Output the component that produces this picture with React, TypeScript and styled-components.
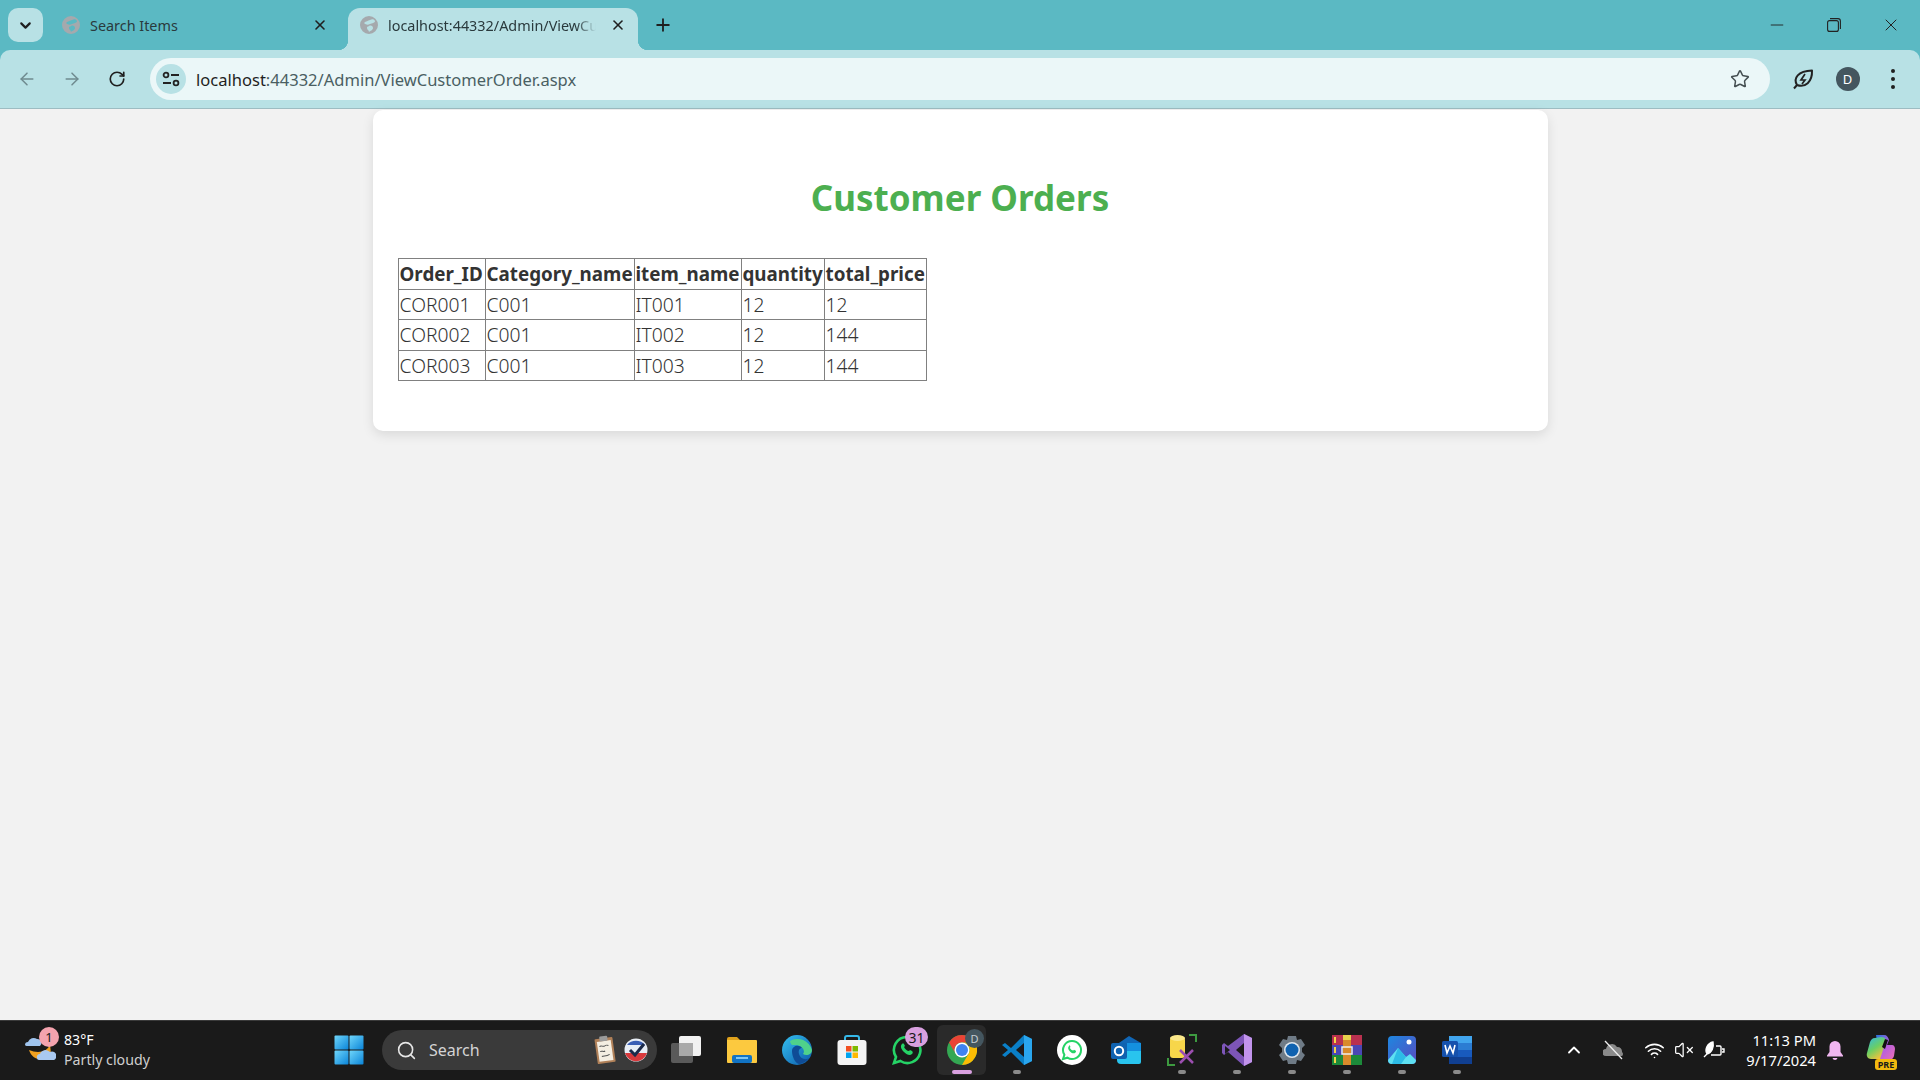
import React from "react";
import styled, { createGlobalStyle } from "styled-components";
import {
  ArrowLeft,
  ArrowRight,
  ChevronDown,
  ChevronUp,
  Minus,
  Plus,
  RotateCw,
  Search,
  Star,
  VolumeX,
  Wifi,
  X,
} from "lucide-react";

const orders = [
  { id: "COR001", category: "C001", item: "IT001", quantity: "12", total: "12" },
  { id: "COR002", category: "C001", item: "IT002", quantity: "12", total: "144" },
  { id: "COR003", category: "C001", item: "IT003", quantity: "12", total: "144" },
];

const UI_FONT = `"Noto Sans", "Open Sans", "Liberation Sans", sans-serif`;

const GlobalStyle = createGlobalStyle`
  html, body {
    margin: 0;
    padding: 0;
    height: 100%;
    overflow: hidden;
  }
  body {
    font-family: ${UI_FONT};
  }
`;

// Browser icons

const GlobeFavicon = () => (
  <svg width="18" height="18" viewBox="0 0 18 18">
    <path
      fillRule="evenodd"
      fill="#a5a9ad"
      d="M9 0a9 9 0 1 0 0 18A9 9 0 0 0 9 0zM4 7c2-2 4-2 6-3s4-1 5 1c0 2-3 2-5 3S6 9 4 7zm5 3c2-1 4 0 4 2s-3 3-4 4c0-2-2-2-2-4s1-1 2-2z"
    />
  </svg>
);

// Taskbar logos

const WindowsLogo = () => (
  <svg width="30" height="30" viewBox="0 0 30 30">
    <defs>
      <linearGradient id="win" x1="0" y1="0" x2="1" y2="1">
        <stop offset="0" stopColor="#6fd6fb" />
        <stop offset="1" stopColor="#0a84d8" />
      </linearGradient>
    </defs>
    <rect x="0.5" y="0.5" width="14" height="14" rx="1" fill="url(#win)" />
    <rect x="15.5" y="0.5" width="14" height="14" rx="1" fill="url(#win)" />
    <rect x="0.5" y="15.5" width="14" height="14" rx="1" fill="url(#win)" />
    <rect x="15.5" y="15.5" width="14" height="14" rx="1" fill="url(#win)" />
  </svg>
);

const WeatherIcon = () => (
  <svg width="32" height="36" viewBox="0 0 32 36">
    <path d="M5 18c3 10 15 13 22 4l-1-10c-2 8-12 10-21 6z" fill="#f0a020" />
    <path d="M1 13a3 3 0 0 1 3-3 6 6 0 0 1 9-3 4 4 0 0 1 3 7H3a2 2 0 0 1-2-1z" fill="#9fc4ee" />
    <path d="M13 26a3 3 0 0 1 3-4 6 6 0 0 1 10-2 4 4 0 0 1 4 8H15a2 2 0 0 1-2-2z" fill="#a9c9f0" />
  </svg>
);

const ClipboardIcon = () => (
  <svg width="24" height="30" viewBox="0 0 24 30">
    <g transform="rotate(-8 12 15)">
      <rect x="3" y="3" width="18" height="25" rx="1" fill="#b08058" />
      <rect x="5" y="6" width="14" height="20" fill="#f4eee2" />
      <rect x="8" y="1" width="8" height="5" rx="1" fill="#9a9a9a" />
      <path d="M7 11c2-2 3 1 5 0s2-1 4 0M7 16c2-1 3 1 5 0M8 21c2-1 4 1 8-1" stroke="#555" fill="none" strokeWidth="1" />
    </g>
  </svg>
);

const BallotIcon = () => (
  <svg width="24" height="24" viewBox="0 0 24 24">
    <circle cx="12" cy="12" r="11.5" fill="#e8eef6" />
    <path d="M1 15h22a11.5 11.5 0 0 1-22 0z" fill="#d8393c" />
    <path d="M3 7a11.5 11.5 0 0 1 18 0z" fill="#3a5fb5" />
    <path d="M6 12l5 5 9-11" stroke="#1b2a4a" strokeWidth="3" fill="none" />
  </svg>
);

const TaskViewIcon = () => (
  <svg width="32" height="30" viewBox="0 0 32 30">
    <rect x="0" y="8" width="22" height="20" rx="2" fill="#5a5a5a" />
    <rect x="8" y="1" width="22" height="20" rx="2" fill="#f1f1f1" />
    <rect x="8" y="8" width="14" height="13" fill="#a9a9a9" />
  </svg>
);

const ExplorerIcon = () => (
  <svg width="32" height="30" viewBox="0 0 32 30">
    <path d="M1 4a2 2 0 0 1 2-2h8l3 3h-13z" fill="#e0a21c" />
    <path d="M1 5h29a1 1 0 0 1 1 1v21a1 1 0 0 1-1 1H2a1 1 0 0 1-1-1z" fill="#fcc93f" />
    <rect x="6" y="20" width="20" height="8" rx="2" fill="#1173c4" />
    <rect x="10" y="22" width="12" height="2" fill="#7cc6f5" />
  </svg>
);

const EdgeIcon = () => (
  <svg width="30" height="30" viewBox="0 0 30 30">
    <defs>
      <linearGradient id="edgeA" x1="0" y1="0" x2="1" y2="1">
        <stop offset="0" stopColor="#35c1f1" />
        <stop offset="1" stopColor="#0b58a8" />
      </linearGradient>
    </defs>
    <circle cx="15" cy="15" r="15" fill="url(#edgeA)" />
    <path d="M8 6a15 15 0 0 1 22 9c0 5-6 6-9 4 3-4-2-9-7-9-3 0-5 1-6-4z" fill="#4fd18b" />
    <path d="M10 16c0-5 7-7 10-3-2 0-4 2-3 6s6 7 10 4a15 15 0 0 1-9 6c-5 0-8-8-8-13z" fill="#0f4c96" />
  </svg>
);

const StoreIcon = () => (
  <svg width="30" height="30" viewBox="0 0 30 30">
    <path d="M8 8V3a2 2 0 0 1 2-2h10a2 2 0 0 1 2 2v5" fill="none" stroke="#35b8e8" strokeWidth="2" />
    <rect x="0.5" y="5" width="29" height="25" rx="3" fill="#f4f4f4" />
    <rect x="9" y="11" width="5.5" height="5.5" fill="#f25022" />
    <rect x="15.5" y="11" width="5.5" height="5.5" fill="#7fba00" />
    <rect x="9" y="17.5" width="5.5" height="5.5" fill="#00a4ef" />
    <rect x="15.5" y="17.5" width="5.5" height="5.5" fill="#ffb900" />
  </svg>
);

const WhatsAppIcon = () => (
  <svg width="32" height="32" viewBox="0 0 32 32">
    <path
      d="M16 3a13 13 0 0 0-11 20L3 29l6.500-2A13 13 0 1 0 16 3z"
      fill="none"
      stroke="#25d366"
      strokeWidth="2.600"
    />
    <path
      d="M11 10c-2 2-1 5 2 8s6 4 8 2c1-1 1-2 0-3l-2-1-1 1c-2 0-4-2-5-4l1-1-1-2c-1-1-1-1-2 0z"
      fill="#25d366"
    />
  </svg>
);

const WhatsAppBadgeIcon = () => (
  <svg width="32" height="32" viewBox="0 0 32 32">
    <circle cx="16" cy="16" r="15" fill="#fff" />
    <path
      d="M16 7a9 9 0 0 0-7.600 13.800L7 25l4.400-1.300A9 9 0 1 0 16 7z"
      fill="none"
      stroke="#25d366"
      strokeWidth="2"
    />
    <path
      d="M13 12c-1.500 1.500-1 3.500 1 5.500s4 2.500 5.500 1c.7-.7.700-1.400 0-2l-1.500-.7-.7.700c-1.400 0-2.800-1.400-3.500-2.800l.7-.7-.7-1.400c-.4-.4-.6-.4-.8.400z"
      fill="#25d366"
    />
  </svg>
);

const ChromeIcon = () => (
  <svg width="30" height="30" viewBox="0 0 30 30">
    <circle cx="15" cy="15" r="15" fill="#34a853" />
    <path d="M15 0a15 15 0 0 1 13 7.500H15a7.500 7.500 0 0 0-6.500 11.300L2 7.500A15 15 0 0 1 15 0z" fill="#ea4335" />
    <path d="M28 7.500A15 15 0 0 1 15 30l6.500-11.200A7.500 7.500 0 0 0 15 7.500z" fill="#fbbc04" />
    <circle cx="15" cy="15" r="7.500" fill="#fff" />
    <circle cx="15" cy="15" r="6" fill="#3f83f0" />
  </svg>
);

const VSCodeIcon = () => (
  <svg width="32" height="32" viewBox="0 0 32 32">
    <path d="M23 1l8 4v22l-8 4L10 18l-6 5-3-2 6-5-6-5 3-2 6 5z" fill="#0a7fc7" />
    <path d="M23 1l8 4v22l-8 4z" fill="#2aa6ee" />
    <path d="M23 9l-8 7 8 7z" fill="#1a1a1a" />
  </svg>
);

const OutlookIcon = () => (
  <svg width="32" height="30" viewBox="0 0 32 30">
    <path d="M5 10L18 1l12 7v7H5z" fill="#1066b5" />
    <path d="M6 14h24v13a2 2 0 0 1-2 2H10a4 4 0 0 1-4-4z" fill="#29c4ee" />
    <path d="M16 8l14 0v8l-14 0z" fill="#1490df" />
    <rect x="0" y="8" width="16" height="16" rx="2" fill="#0f62b0" />
    <circle cx="8" cy="16" r="4.200" fill="none" stroke="#fff" strokeWidth="2" />
  </svg>
);

const ToolIcon = () => (
  <svg width="30" height="32" viewBox="0 0 30 32">
    <path d="M22 1h7v7M1 24v7h7" fill="none" stroke="#3d9a40" strokeWidth="2" />
    <rect x="3" y="3" width="15" height="21" rx="3" fill="#f7d64a" />
    <ellipse cx="10.500" cy="4" rx="7.500" ry="3" fill="#fbe88a" />
    <path d="M13 16l13 13M26 16L13 29" stroke="#9c4fb0" strokeWidth="2.500" />
  </svg>
);

const VisualStudioIcon = () => (
  <svg width="30" height="32" viewBox="0 0 30 32">
    <path d="M22 0l8 4v24l-8 4-16-14-4 3-2-2V11l2-2 4 3z" fill="#7d55b8" />
    <path d="M22 0l8 4v24l-8 4z" fill="#c294ec" />
    <path d="M22 9l-8 7 8 7z" fill="#1a1a1a" />
    <path d="M3 12l5 4-5 4z" fill="#1a1a1a" />
  </svg>
);

const SettingsIcon = () => (
  <svg width="30" height="30" viewBox="0 0 30 30">
    <path
      d="M11 1h8l1 4 4-1 4 6-3 3v4l3 3-4 6-4-1-1 4h-8l-1-4-4 1-4-6 3-3v-4L2 10l4-6 4 1z"
      fill="#6f7b86"
      strokeLinejoin="round"
    />
    <circle cx="15" cy="15" r="8" fill="#dfe7ee" />
    <circle cx="15" cy="15" r="6.500" fill="#0f62b0" />
  </svg>
);

const WinRarIcon = () => (
  <svg width="30" height="30" viewBox="0 0 30 30">
    <rect y="0" width="30" height="10" fill="#b9314f" />
    <rect y="10" width="30" height="10" fill="#4a47b5" />
    <rect y="20" width="30" height="10" fill="#1c8a3a" />
    <rect x="11" y="0" width="8" height="30" fill="#d98a2b" />
    <rect x="11" y="0" width="8" height="5" fill="#e8d04c" />
    <rect x="10" y="12" width="10" height="7" fill="none" stroke="#eee" strokeWidth="1.500" />
    <rect x="2" y="2" width="2" height="6" fill="#f3d648" />
    <rect x="2" y="12" width="2" height="6" fill="#f3d648" />
    <rect x="2" y="22" width="2" height="6" fill="#f3d648" />
  </svg>
);

const PhotosIcon = () => (
  <svg width="28" height="28" viewBox="0 0 28 28">
    <defs>
      <linearGradient id="photoBg" x1="0" y1="0" x2="1" y2="1">
        <stop offset="0" stopColor="#1d87e0" />
        <stop offset="1" stopColor="#5a4bc0" />
      </linearGradient>
    </defs>
    <rect width="28" height="28" rx="4" fill="url(#photoBg)" />
    <circle cx="21" cy="6" r="2.500" fill="#fff" />
    <path d="M0 24l10-12 8 9 4-3 6 6v0a4 4 0 0 1-4 4H4a4 4 0 0 1-4-4z" fill="#5ee0f2" />
    <path d="M10 12l8 9-5 7H4z" fill="#2dbce6" />
  </svg>
);

const WordIcon = () => (
  <svg width="30" height="28" viewBox="0 0 30 28">
    <rect x="7" y="0" width="23" height="28" rx="1" fill="#2b7cd3" />
    <rect x="7" y="0" width="23" height="7" fill="#41a5ee" />
    <rect x="7" y="14" width="23" height="7" fill="#185abd" />
    <rect x="7" y="21" width="23" height="7" fill="#103f91" />
    <rect x="0" y="5" width="16" height="16" rx="1.500" fill="#1551ad" />
    <path d="M3 9l2 8 3-7 3 7 2-8" fill="none" stroke="#fff" strokeWidth="1.600" />
  </svg>
);

const CopilotIcon = () => (
  <svg width="30" height="26" viewBox="0 0 30 26">
    <defs>
      <linearGradient id="copilotA" x1="0" y1="0" x2="0.600" y2="1">
        <stop offset="0" stopColor="#2fb8e8" />
        <stop offset="0.550" stopColor="#6bcf63" />
        <stop offset="1" stopColor="#f2c23c" />
      </linearGradient>
      <linearGradient id="copilotB" x1="0" y1="0" x2="1" y2="1">
        <stop offset="0" stopColor="#2573d8" />
        <stop offset="0.500" stopColor="#b45fe0" />
        <stop offset="1" stopColor="#f06fb0" />
      </linearGradient>
    </defs>
    <path d="M10 0h8c3 0 4 2 5 5l-2 5h5c2 0 3 2 3 4l-1 7c-1 3-3 4-6 4h-8z" fill="url(#copilotB)" />
    <path d="M9 3c-3 0-4 2-5 4L1 18c-1 3 1 6 4 6h9l3-9 3-10c-1-2-2-3-5-3z" fill="url(#copilotA)" />
    <path d="M16 12l3-8 3 1-3 9z" fill="#111" />
  </svg>
);

const apps = [
  { key: "taskview", icon: <TaskViewIcon /> },
  { key: "explorer", icon: <ExplorerIcon /> },
  { key: "edge", icon: <EdgeIcon /> },
  { key: "store", icon: <StoreIcon /> },
  { key: "whatsapp", icon: <WhatsAppIcon />, badge: "31" },
  { key: "chrome", icon: <ChromeIcon />, active: true, profile: "D" },
  { key: "vscode", icon: <VSCodeIcon />, running: true },
  { key: "whatsapp2", icon: <WhatsAppBadgeIcon /> },
  { key: "outlook", icon: <OutlookIcon /> },
  { key: "tool", icon: <ToolIcon />, running: true },
  { key: "vs", icon: <VisualStudioIcon />, running: true },
  { key: "settings", icon: <SettingsIcon />, running: true },
  { key: "winrar", icon: <WinRarIcon />, running: true },
  { key: "photos", icon: <PhotosIcon />, running: true },
  { key: "word", icon: <WordIcon />, running: true },
];

export default function App() {
  return (
    <Screen>
      <GlobalStyle />

      {/* Tab strip */}
      <TabStrip>
        <TabListButton>
          <ChevronDown size={17} strokeWidth={3} />
        </TabListButton>
        <Tab>
          <GlobeFavicon />
          <TabTitle>Search Items</TabTitle>
          <X size={16} strokeWidth={2.400} />
        </Tab>
        <Tab $active>
          <GlobeFavicon />
          <TabTitle $fade>localhost:44332/Admin/ViewCu</TabTitle>
          <X size={16} strokeWidth={2.400} />
        </Tab>
        <NewTab>
          <Plus size={20} strokeWidth={2.200} />
        </NewTab>
        <WindowControls>
          <WindowButton>
            <Minus size={20} strokeWidth={1.100} />
          </WindowButton>
          <WindowButton>
            <svg width="14" height="14" viewBox="0 0 14 14" fill="none" stroke="#222" strokeWidth="1.100">
              <rect x="0.600" y="2.600" width="10.800" height="10.800" rx="2" />
              <path d="M3 .6h8a2.400 2.400 0 0 1 2.400 2.400v8" />
            </svg>
          </WindowButton>
          <WindowButton>
            <X size={20} strokeWidth={1.200} />
          </WindowButton>
        </WindowControls>
      </TabStrip>

      {/* Toolbar */}
      <Toolbar>
        <NavButton $muted>
          <ArrowLeft size={20} strokeWidth={1.800} />
        </NavButton>
        <NavButton $muted>
          <ArrowRight size={20} strokeWidth={1.800} />
        </NavButton>
        <NavButton>
          <RotateCw size={18} strokeWidth={2.200} />
        </NavButton>
        <AddressBar>
          <SiteInfo>
            <svg width="18" height="16" viewBox="0 0 18 16" fill="none" stroke="#222" strokeWidth="1.800">
              <circle cx="4" cy="4" r="2.400" />
              <path d="M9 4h8M1 12h8" />
              <circle cx="14" cy="12" r="2.400" />
            </svg>
          </SiteInfo>
          <Url>
            localhost<UrlRest>:44332/Admin/ViewCustomerOrder.aspx</UrlRest>
          </Url>
          <BookmarkStar>
            <Star size={20} strokeWidth={1.800} />
          </BookmarkStar>
        </AddressBar>
        <ToolbarActions>
          <ActionSlot>
            <svg width="22" height="22" viewBox="0 0 22 22" fill="none" stroke="#222" strokeWidth="2">
              <path d="M5 17C1 10 6 3 20 2.500 20.500 14 13 20 5 17zM2 20.500L5 17" strokeLinejoin="round" />
              <path d="M13 6l-4 6h4l-3 4" strokeWidth="1.700" />
            </svg>
          </ActionSlot>
          <ActionSlot>
            <Avatar>D</Avatar>
          </ActionSlot>
          <ActionSlot>
            <Kebab>
              <i />
              <i />
              <i />
            </Kebab>
          </ActionSlot>
        </ToolbarActions>
      </Toolbar>

      {/* Page */}
      <Page>
        <Card>
          <Title>Customer Orders</Title>
          <OrdersTable>
            <colgroup>
              <col width="87" />
              <col width="149" />
              <col width="107" />
              <col width="83" />
              <col width="102" />
            </colgroup>
            <thead>
              <tr>
                <HeadCell>Order_ID</HeadCell>
                <HeadCell>Category_name</HeadCell>
                <HeadCell>item_name</HeadCell>
                <HeadCell>quantity</HeadCell>
                <HeadCell>total_price</HeadCell>
              </tr>
            </thead>
            <tbody>
              {orders.map((o) => (
                <tr key={o.id}>
                  <Cell>{o.id}</Cell>
                  <Cell>{o.category}</Cell>
                  <Cell>{o.item}</Cell>
                  <Cell>{o.quantity}</Cell>
                  <Cell>{o.total}</Cell>
                </tr>
              ))}
            </tbody>
          </OrdersTable>
        </Card>
      </Page>

      {/* Taskbar */}
      <Taskbar>
        <Weather>
          <WeatherGlyph>
            <WeatherIcon />
            <WeatherBadge>1</WeatherBadge>
          </WeatherGlyph>
          <WeatherText>
            <span>83°F</span>
            <WeatherNote>Partly cloudy</WeatherNote>
          </WeatherText>
        </Weather>
        <StartButton>
          <WindowsLogo />
        </StartButton>
        <SearchPill>
          <Search size={21} strokeWidth={1.800} />
          <SearchLabel>Search</SearchLabel>
          <SearchArt>
            <ClipboardIcon />
            <BallotIcon />
          </SearchArt>
        </SearchPill>
        <Apps>
          {apps.map((a) => (
            <AppSlot key={a.key} $active={a.active}>
              {a.icon}
              {a.badge && <CountBadge>{a.badge}</CountBadge>}
              {a.profile && <ProfileBadge>{a.profile}</ProfileBadge>}
              {(a.running || a.active) && <Indicator $active={a.active} />}
            </AppSlot>
          ))}
        </Apps>
        <Tray>
          <TrayIcon $width={40}>
            <ChevronUp size={20} strokeWidth={2.200} />
          </TrayIcon>
          <TrayIcon $width={40}>
            <svg width="22" height="20" viewBox="0 0 22 20">
              <path d="M3 16a3.500 3.500 0 0 1 0-7 6 6 0 0 1 11-2 4.500 4.500 0 0 1 5 5 2.500 2.500 0 0 1 0 4z" fill="#8a8a8a" />
              <path d="M2 1l17 18" stroke="#eee" strokeWidth="1.300" />
            </svg>
          </TrayIcon>
          <TrayIcon $width={40}>
            <Wifi size={21} strokeWidth={1.800} />
          </TrayIcon>
          <TrayIcon $width={20}>
            <VolumeX size={20} strokeWidth={1.500} />
          </TrayIcon>
          <TrayIcon $width={40}>
            <svg width="22" height="20" viewBox="0 0 22 20" fill="none" stroke="#fff" strokeWidth="1.400">
              <path d="M8 15h9a1 1 0 0 0 1-1V7a1 1 0 0 0-1-1h-4M19 9h2v3h-2" />
              <path d="M1 17l3-3c-3-5 1-11 6-12 1 5-1 11-6 12" fill="#fff" />
            </svg>
          </TrayIcon>
          <Clock>
            <span>11:13 PM</span>
            <span>9/17/2024</span>
          </Clock>
          <BellSlot>
            <svg width="18" height="20" viewBox="0 0 18 20" fill="#f0b6f0">
              <path d="M9 1a5.500 5.500 0 0 0-5.500 5.500V12L1 15.500v1h16v-1L14.500 12V6.500A5.500 5.500 0 0 0 9 1z" />
              <path d="M6.500 18a2.600 2.600 0 0 0 5 0z" />
            </svg>
          </BellSlot>
          <CopilotSlot>
            <CopilotIcon />
            <PreTag>PRE</PreTag>
          </CopilotSlot>
        </Tray>
      </Taskbar>
    </Screen>
  );
}

// Styled Components

const Screen = styled.div`
  width: 1920px;
  height: 1080px;
  display: flex;
  flex-direction: column;
  overflow: hidden;
  background: #5bb9c3;
`;

const TabStrip = styled.div`
  height: 50px;
  flex: none;
  display: flex;
  align-items: flex-end;
  padding-left: 8px;
`;

const TabListButton = styled.div`
  width: 35px;
  height: 34px;
  margin: 0 7px 8px 0;
  border-radius: 10px;
  background: #b8e1e5;
  color: #1f1f1f;
  display: flex;
  align-items: center;
  justify-content: center;
`;

const Tab = styled.div<{ $active?: boolean }>`
  position: relative;
  width: 290px;
  height: 42px;
  margin-left: ${(p) => (p.$active ? "8px" : "0")};
  padding: 0 12px 8px 12px;
  box-sizing: border-box;
  display: flex;
  align-items: center;
  gap: 10px;
  border-radius: 12px 12px 0 0;
  background: ${(p) => (p.$active ? "#b8e1e5" : "transparent")};
  color: #1f1f1f;

  svg {
    flex: none;
  }

  ${(p) =>
    p.$active &&
    `
    &::before, &::after {
      content: "";
      position: absolute;
      bottom: 0;
      width: 10px;
      height: 10px;
    }
    &::before {
      left: -10px;
      background: radial-gradient(circle at 0 0, transparent 10px, #b8e1e5 10.5px);
    }
    &::after {
      right: -10px;
      background: radial-gradient(circle at 100% 0, transparent 10px, #b8e1e5 10.5px);
    }
  `}
`;

const TabTitle = styled.div<{ $fade?: boolean }>`
  flex: 1;
  min-width: 0;
  white-space: nowrap;
  font-size: 14.400px;
  color: #2a3a3d;
  ${(p) =>
    p.$fade &&
    `
    mask-image: linear-gradient(to right, #000 188px, transparent 208px);
  `}
`;

const NewTab = styled.div`
  width: 50px;
  height: 42px;
  padding-bottom: 8px;
  box-sizing: border-box;
  display: flex;
  align-items: center;
  justify-content: center;
  color: #1f1f1f;
`;

const WindowControls = styled.div`
  margin-left: auto;
  height: 50px;
  padding-right: 1px;
  display: flex;
  align-self: flex-start;
  align-items: center;
`;

const WindowButton = styled.div`
  width: 57px;
  height: 50px;
  display: flex;
  align-items: center;
  justify-content: center;
  color: #222;
`;

const Toolbar = styled.div`
  height: 58px;
  flex: none;
  box-sizing: content-box;
  padding-left: 4px;
  display: flex;
  align-items: center;
  background: #b8e1e5;
  border-bottom: 1px solid #9dbcc2;
  border-radius: 10px 10px 0 0;
`;

const NavButton = styled.div<{ $muted?: boolean }>`
  width: 45px;
  height: 40px;
  display: flex;
  align-items: center;
  justify-content: center;
  color: ${(p) => (p.$muted ? "#6f8a8f" : "#1f1f1f")};
`;

const AddressBar = styled.div`
  width: 1620px;
  height: 42px;
  margin-left: 11px;
  padding: 0 0 0 6px;
  box-sizing: border-box;
  display: flex;
  align-items: center;
  background: #ebf7f8;
  border-radius: 21px;
`;

const SiteInfo = styled.div`
  width: 30px;
  height: 30px;
  flex: none;
  border-radius: 50%;
  background: #b8e1e5;
  display: flex;
  align-items: center;
  justify-content: center;
`;

const Url = styled.div`
  margin-left: 10px;
  font-size: 16.550px;
  color: #1f1f1f;
  white-space: nowrap;
`;

const UrlRest = styled.span`
  color: #4a5f63;
`;

const BookmarkStar = styled.div`
  margin-left: auto;
  width: 60px;
  display: flex;
  justify-content: center;
  color: #454f52;
`;

const ToolbarActions = styled.div`
  flex: 1;
  padding-left: 10px;
  display: flex;
  align-items: center;
`;

const ActionSlot = styled.div`
  width: 45px;
  display: flex;
  align-items: center;
  justify-content: center;
`;

const Avatar = styled.div`
  width: 24px;
  height: 24px;
  border-radius: 50%;
  background: #44565f;
  color: #fff;
  font-size: 13px;
  display: flex;
  align-items: center;
  justify-content: center;
`;

const Kebab = styled.div`
  width: 4px;
  display: flex;
  flex-direction: column;
  gap: 4px;

  i {
    width: 4px;
    height: 4px;
    border-radius: 50%;
    background: #1f1f1f;
  }
`;

const Page = styled.main`
  flex: 1;
  min-height: 0;
  display: flex;
  flex-direction: column;
  align-items: center;
  background: #f2f2f2;
`;

const Card = styled.section`
  width: 1175px;
  height: 321px;
  margin-top: 1px;
  padding: 0 25px;
  box-sizing: border-box;
  background: #fff;
  border-radius: 10px;
  box-shadow: 0 4px 12px rgba(0, 0, 0, 0.1);
`;

const Title = styled.h2`
  margin: 0;
  padding: 56px 0 28px;
  text-align: center;
  font-size: 35px;
  line-height: 64px;
  height: 64px;
  font-weight: 700;
  color: #4caf50;
`;

const OrdersTable = styled.table`
  table-layout: fixed;
  width: 528px;
  border-collapse: collapse;
  border: 1px solid #808080;
  color: #333;
  font-size: 18.800px;
`;

const HeadCell = styled.th`
  height: 30px;
  padding: 0 1px;
  border: 1px solid #808080;
  text-align: left;
  font-weight: 700;
  white-space: nowrap;
  overflow: hidden;
`;

const Cell = styled.td`
  height: 29.340px;
  padding: 0 1px;
  border: 1px solid #808080;
  font-size: 19.300px;
  font-weight: 300;
  white-space: nowrap;
`;

const Taskbar = styled.footer`
  height: 58px;
  padding-bottom: 1px;
  flex: none;
  display: flex;
  align-items: center;
  background: #1a1a1a;
  border-top: 1px solid #3a3a3a;
  color: #fff;
`;

const Weather = styled.div`
  width: 321px;
  flex: none;
  padding-left: 24px;
  box-sizing: border-box;
  display: flex;
  align-items: center;
  gap: 8px;
`;

const WeatherGlyph = styled.div`
  position: relative;
  width: 32px;
  height: 36px;
`;

const WeatherBadge = styled.div`
  position: absolute;
  top: -5px;
  right: -3px;
  width: 20px;
  height: 20px;
  border-radius: 50%;
  background: #f4a3ae;
  color: #1a1a1a;
  font-size: 13px;
  display: flex;
  align-items: center;
  justify-content: center;
`;

const WeatherText = styled.div`
  display: flex;
  flex-direction: column;
  font-size: 14.200px;
  line-height: 20px;
`;

const WeatherNote = styled.span`
  color: #cfcfcf;
`;

const StartButton = styled.div`
  width: 55px;
  flex: none;
  display: flex;
  align-items: center;
  justify-content: center;
`;

const SearchPill = styled.div`
  width: 275px;
  height: 40px;
  margin: 0 2px 0 6px;
  flex: none;
  padding: 0 9px 0 14px;
  box-sizing: border-box;
  display: flex;
  align-items: center;
  background: #3a3a3a;
  border-radius: 20px;
  color: #e6e6e6;
`;

const SearchLabel = styled.span`
  margin-left: 12px;
  font-size: 16px;
  color: #d4d4d4;
`;

const SearchArt = styled.div`
  margin-left: auto;
  display: flex;
  align-items: center;
  gap: 7px;
`;

const Apps = styled.div`
  display: flex;
  align-items: center;
`;

const AppSlot = styled.div<{ $active?: boolean }>`
  position: relative;
  width: 55px;
  height: 50px;
  display: flex;
  align-items: center;
  justify-content: center;

  ${(p) =>
    p.$active &&
    `
    &::before {
      content: "";
      position: absolute;
      inset: 0 3px;
      border-radius: 6px;
      background: #2a2a2a;
    }
    svg {
      position: relative;
    }
  `}
`;

const CountBadge = styled.div`
  position: absolute;
  top: 2px;
  right: 6px;
  width: 23px;
  height: 20px;
  border-radius: 10px;
  background: #d9a0e0;
  color: #1a1a1a;
  font-size: 14px;
  display: flex;
  align-items: center;
  justify-content: center;
`;

const ProfileBadge = styled.div`
  position: absolute;
  top: 4px;
  right: 5px;
  width: 19px;
  height: 19px;
  border-radius: 50%;
  background: #44565f;
  color: #c4ccd0;
  font-size: 11px;
  display: flex;
  align-items: center;
  justify-content: center;
`;

const Indicator = styled.div<{ $active?: boolean }>`
  position: absolute;
  bottom: 1px;
  left: 50%;
  transform: translateX(-50%);
  width: ${(p) => (p.$active ? "20px" : "8px")};
  height: 4px;
  border-radius: 2px;
  background: ${(p) => (p.$active ? "#d9a0e0" : "#8a8a8a")};
`;

const Tray = styled.div`
  margin-left: auto;
  padding-right: 24px;
  display: flex;
  align-items: center;
`;

const TrayIcon = styled.div<{ $width: number }>`
  width: ${(p) => p.$width}px;
  flex: none;
  display: flex;
  align-items: center;
  justify-content: center;
`;

const Clock = styled.div`
  margin-left: 12px;
  display: flex;
  flex-direction: column;
  align-items: flex-end;
  font-size: 14.700px;
  line-height: 20px;
`;

const BellSlot = styled.div`
  width: 38px;
  display: flex;
  justify-content: center;
`;

const CopilotSlot = styled.div`
  position: relative;
  width: 30px;
  height: 30px;
  margin-left: 12px;
`;

const PreTag = styled.div`
  position: absolute;
  right: -1px;
  bottom: -5px;
  width: 22px;
  border-radius: 3px;
  background: #f2b90f;
  color: #1a1a1a;
  font-size: 9px;
  line-height: 11px;
  font-weight: 700;
  text-align: center;
`;
